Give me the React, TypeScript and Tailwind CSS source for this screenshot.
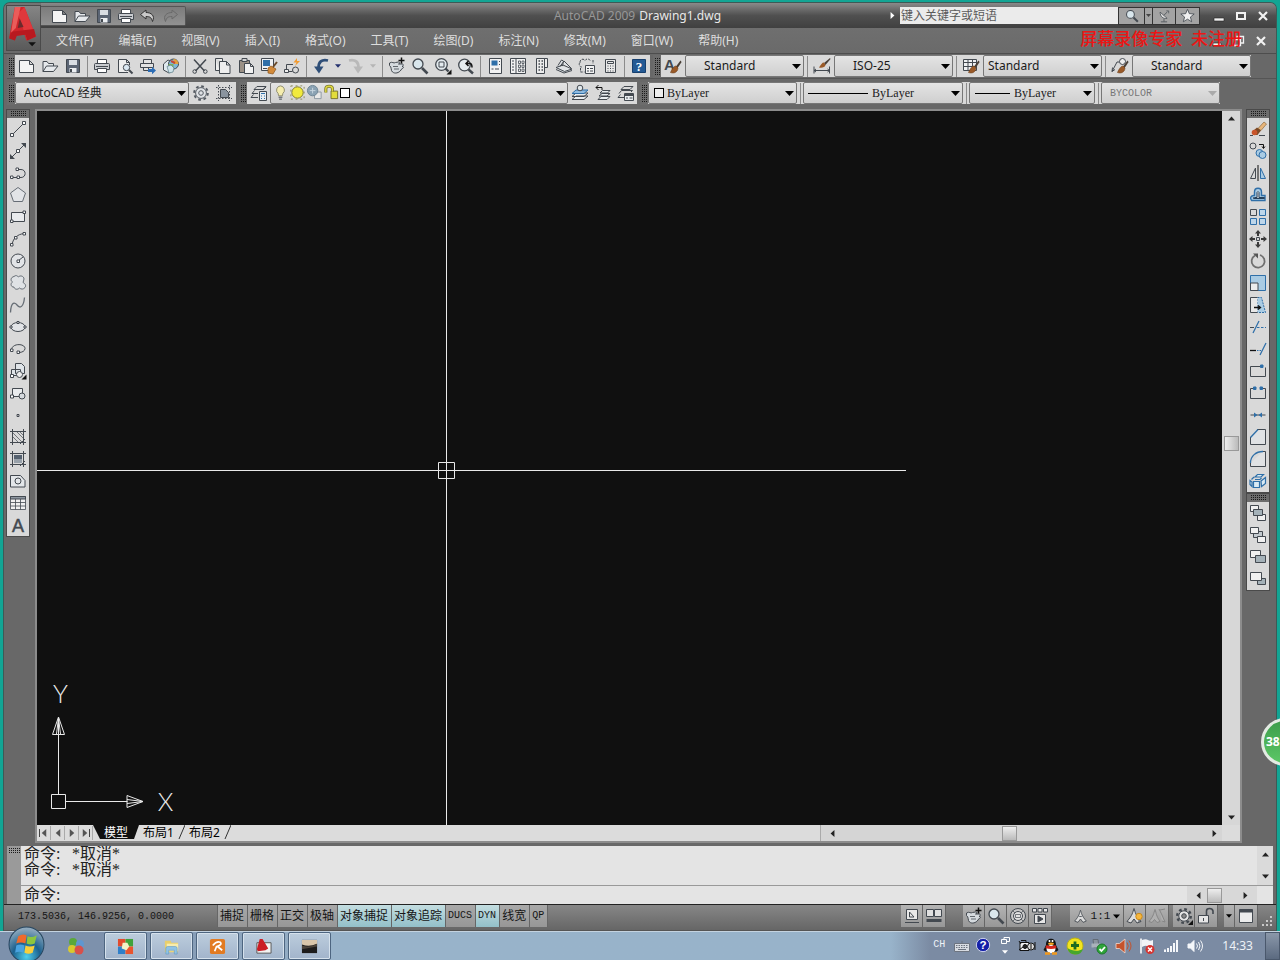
import { useState } from 'react'
import type { ReactNode } from 'react'

const INK = '#434950'
const BLUE = '#2f6fa8'
const SKY = '#a9cbe3'

const BRUSH = (
    <g>
        <path d="M16.500 3.500 12 9.500l1.600 1.400 4-5.900z" fill="#4a4038" stroke="none" />
        <path d="M12 9c-2 .2-3.500 2-5.500 6.500 3.500 1.200 7 0 7.500-4.500z" fill="#9a5a28" stroke="#6b3c18" strokeWidth=".6" />
    </g>
)

// All drawings share an 18x18 box
const ICONS: Record<string, ReactNode> = {
    new: <path d="M1.500 3.500h10l4 4v8h-14zM11.500 3.500v4h4" fill="#f4f4f4" />,
    open: <path d="M2 14.500V4.500h4l1.500 2h5v2.500M2 14.500l3.500-5.500h11.500l-4.500 5.500z" fill="#e6e9ec" />,
    save: (
        <g>
            <path d="M2.500 2.500h13v13h-13z" fill="#5b6574" />
            <path d="M5 3h8v5H5z" fill="#d8dde3" stroke="none" />
            <path d="M5.500 11h7v4.500h-7z" fill="#eceff2" stroke="none" />
            <path d="M7 12v3" strokeWidth="2" />
        </g>
    ),
    print: (
        <g>
            <path d="M4.500 7V2.500h9V7" fill="#fff" />
            <path d="M1.500 7.500q0-1 1-1h13q1 0 1 1v5h-15z" fill="#c9ccd0" />
            <path d="M4.500 11.500h9v4h-9z" fill="#fff" />
            <path d="M3 9.500h12" />
        </g>
    ),
    preview: (
        <g>
            <path d="M12 15.500H2.500v-13h8l3 3V8M10.500 2.500v3h3" fill="#eee" />
            <circle cx="10.500" cy="10.500" r="3.200" fill="#dbe8f2" />
            <path d="m13 13 3.500 3.500" strokeWidth="2" />
        </g>
    ),
    publish: (
        <g>
            <path d="M4.500 6V2.500h8V6M1.500 6.500h13v4h-13zM4.500 10.500h5v3h-5z" fill="#e3e3e3" />
            <path d="M9 12h4V9.800l4 3.700-4 3.700V15H9z" fill="#2b6cb5" stroke="none" />
        </g>
    ),
    dwf: (
        <g>
            <path d="M1.500 7 6 3l5 2v8l-4 3-5.500-3z" fill="#dfe9ee" />
            <circle cx="11.500" cy="7" r="5" fill="#7fb7d8" />
            <path d="M11.500 2a5 5 0 0 1 5 5h-5z" fill="#e3a13c" stroke="none" />
            <path d="M6.500 7h5v5a5 5 0 0 1-5-5z" fill="#7fb05a" stroke="none" />
            <path d="M9 4l4 2" stroke="#c2453a" strokeWidth="2" />
            <path d="M5 9.500 9 8l3 3-1 4-4 1z" fill="#cfe3ea" stroke="#5a7c88" strokeWidth=".7" />
        </g>
    ),
    cut: (
        <g>
            <path d="M3 2.500 13.500 14M15 2.500 4.500 14" strokeWidth="1.500" />
            <circle cx="3.700" cy="14.500" r="1.800" />
            <circle cx="14.300" cy="14.500" r="1.800" />
        </g>
    ),
    copy: <path d="M1.500 1.500h7v3M1.500 1.500v12h4M5.500 4.500h7l3.500 3.500v8.500H5.500zM12.500 4.500V8H16" fill="#eee" />,
    paste: (
        <g>
            <path d="M2.500 3.500h10v12h-10z" fill="#9b9186" />
            <path d="M5 1.500h5v3H5z" fill="#d5d5d5" />
            <path d="M7.500 6.500h6l3 3v7h-9zM13.500 6.500v3h3" fill="#f2f2f2" />
        </g>
    ),
    match: (
        <g>
            <path d="M1.500 1.500h12v12h-12z" fill="#eef1f4" />
            <path d="M3 3h7v6H3z" fill={BLUE} stroke="none" />
            <path d="M3 11.500h4" />
            <path d="M17 5l-4 5" stroke="#6b4a2a" strokeWidth="2" />
            <path d="M8 11l3-2 5 3-3 5-5-1z" fill="#d28a3a" stroke="#8a531d" strokeWidth=".7" />
        </g>
    ),
    block: (
        <g>
            <path d="M10 7.500H3.500v6M5.500 14.500h4" />
            <path d="M1.500 12.500h4v3h-4z" fill="#eee" />
            <circle cx="12.500" cy="13" r="3" />
            <path d="m14 1-3.500 4.500h3L12 9l5-5h-3z" fill="#f29a2e" stroke="none" />
        </g>
    ),
    undo: (
        <g>
            <path d="M16 3.500C9.500 2 6.500 5 6.500 11" stroke="#2f4f78" strokeWidth="2.800" />
            <path d="M2 9.500h9.500L7 16.500z" fill="#2f4f78" stroke="none" />
        </g>
    ),
    redo: (
        <g>
            <path d="M2 3.500C8.500 2 11.500 5 11.500 11" stroke="#b9b9b9" strokeWidth="2.800" />
            <path d="M16 9.500H6.500l4.500 7z" fill="#b9b9b9" stroke="none" />
        </g>
    ),
    undoSmall: <path d="M7 3 1.500 7.500 7 12V9.500c4 0 5.500 1 6.500 5 3-6-1.500-9-6.500-9z" fill="#c9c9c9" stroke="#333" />,
    redoSmall: <path d="m11 3 5.500 4.500L11 12V9.500c-4 0-5.500 1-6.500 5-3-6 1.500-9 6.500-9z" fill="#858585" stroke="#6a6a6a" />,
    pan: (
        <g>
            <path d="M1.500 6c3-2 4 1 6-.500l3-.500c2 0 1.500 2 0 2h3.500c2 0 1.500 2 0 2.500h1c1 1 0 2-1 2l-1 1.500c-2 3-6 4-8.500 2C2.500 13.500 4 10 1.500 8.500z" fill="#d5dade" />
            <path d="M5 9.500h5M6 12h5" strokeWidth=".8" />
            <path d="M13.500.5v6M10.500 3.500h6" stroke="#111" strokeWidth="1.500" />
        </g>
    ),
    zoom: (
        <g>
            <circle cx="7" cy="7" r="5" fill="#d9e6ec" strokeWidth="1.300" />
            <path d="m11 11 5.500 5.500" strokeWidth="2.600" />
        </g>
    ),
    zoomWin: (
        <g>
            <circle cx="7.500" cy="7.500" r="5.800" fill="#e4ebef" strokeWidth="1.300" />
            <path d="M5 5h5v5H5z" />
            <path d="m11.500 11.500 3 3" strokeWidth="2.400" />
            <path d="M17.500 12.500v5h-5z" fill="#111" stroke="none" />
        </g>
    ),
    zoomPrev: (
        <g>
            <circle cx="7.500" cy="8" r="5.800" fill="#e4ebef" strokeWidth="1.300" />
            <path d="m11.500 12.500 4.500 4" strokeWidth="2.400" />
            <path d="M9 6.500h4q2 0 2 4M11.500 4 9 6.500 11.500 9" stroke="#111" strokeWidth="1.500" />
        </g>
    ),
    props: (
        <g>
            <path d="M3.500 1.500h12v15h-12z" fill="#f2f2f2" />
            <path d="M5.500 3.500h6v5h-6z" fill={BLUE} stroke="none" />
            <path d="M5.500 12h2M9 12h4M13.500 4v1M13.500 7v1" />
        </g>
    ),
    center: (
        <g>
            <path d="M1.500 1.500h15v15h-15zM7 1.500v15" fill="#f2f2f2" />
            <path d="M3 4h2M3 7h2M3 10h2M3 13h2" />
            <path d="M9.500 4h2v2.500h-2zM13 4h2v2.500h-2zM9.500 8h2v2.500h-2zM13 8h2v2.500h-2zM9.500 12h2v2.500h-2zM13 12h2v2.500h-2z" strokeWidth=".8" />
        </g>
    ),
    palettes: (
        <g>
            <path d="M4.500 1.500h8v15h-8zM12.500 1.500h3v9h-3z" fill="#ececec" />
            <path d="M6.500 4h1.500M9.500 4H11M6.500 7h1.500M9.500 7H11M6.500 10h1.500M9.500 10H11M6.500 13h1.500M9.500 13H11" strokeWidth="1.500" />
        </g>
    ),
    sheets: <path d="M1 10.500 9.500 14.500 17 12 8 8zM3 8.500 6.500 3l2 1-1 5M5 9.500 9 4l7 7M1 12.500l8 3.500 8-2.500" fill="#dfe3e6" />,
    markup: (
        <g>
            <path d="M2 5.500c0-4 4-4 5-2 2-3 6-1 5 1M2 5.500c-2 2 0 5 2 4.500M15 3v4M2.500 11v4h4" strokeDasharray="2.500 1.200" />
            <path d="M7.500 8.500h9v8h-9z" fill="#f2f2f2" />
            <path d="M9 11.500h2M12 11.500h3M9 14h2M12 14h3" />
        </g>
    ),
    calc: (
        <g>
            <path d="M4.500 2.500h10v13h-10z" fill="#e8e8e8" />
            <path d="M6.500 4.500h6v2h-6z" />
            <path d="M6.500 9h1M9 9h1M11.500 9h1M6.500 11.500h1M9 11.500h1M11.500 11.500h1M6.500 14h1M9 14h1M11.500 14h1" />
        </g>
    ),
    help: (
        <g>
            <path d="M2.500 2.500h13v13h-13z" fill="#245a94" stroke="#163f6e" />
            <text x="9" y="14" textAnchor="middle" fontSize="13" fontWeight="bold" fill="#fff" stroke="none" fontFamily="Liberation Serif, serif">?</text>
        </g>
    ),
    textStyle: (
        <g>
            <text x="0" y="13" fontSize="15" fontWeight="bold" fill={INK} stroke="none" fontFamily="Liberation Sans, sans-serif">A</text>
            {BRUSH}
        </g>
    ),
    dimStyle: (
        <g>
            <path d="M1 9.500v7M16.500 9.500v7M1 13.500h15.500M3 12l-2 1.500L3 15M14.500 12l2 1.500-2 1.500" />
            <path d="M17 1 11 6l1.500 2 5-6z" fill="#4a4038" stroke="none" />
            <path d="M11 5.500c-2 0-3 2-5 5 3 .500 6 0 6.500-2.500z" fill="#9a5a28" stroke="none" />
        </g>
    ),
    tableStyle: (
        <g>
            <path d="M1.500 2.500h13v11h-13zM1.500 5.500h13M1.500 9.500h13M6 2.500v11M10.500 2.500v11" fill="#eef0f2" />
            {BRUSH}
        </g>
    ),
    leader: (
        <g>
            <path d="M1 14.500 6 5h4M1 14.500l.5-4M1 14.500l3-2" />
            <circle cx="11.500" cy="4.500" r="3" fill="#eee" />
            {BRUSH}
        </g>
    ),
    gear: (
        <g stroke="#555b63">
            <circle cx="9" cy="9" r="6.800" strokeWidth="2" strokeDasharray="2.700 2.640" />
            <circle cx="9" cy="9" r="5.400" fill="#dfe2e5" />
            <circle cx="9" cy="9" r="2.300" />
        </g>
    ),
    workspace: (
        <g>
            <path d="M3.500 1v16M14.500 1v16M1 3.500h16M1 14.500h16" strokeDasharray="1.500 1.500" />
            <path d="M5.500 5.500h5l3 3v5h-8z" fill="#8a949f" />
        </g>
    ),
    layers: (
        <g>
            <path d="M4 5.500 7 2.500h9l-3 3zM2 9.500l2.500-3M2 9.500h6M1 13.500l2.500-3M1 13.500h7M16 3l-3 3" />
            <path d="M9.500 7.500h7v9h-7z" fill="#e9edf0" />
            <path d="M11 9.500h4M11 12h1M14 12h1M11 14.500h1M14 14.500h1" stroke={BLUE} />
        </g>
    ),
    layerCur: (
        <g>
            <path d="M1 15.500 5 12h12l-4 3.500zM1 12.500 5 9h12l-4 3.500z" fill="#e9edf0" />
            <path d="M1 9.500 5 6h12l-4 3.500z" fill="#8fbbe0" stroke={BLUE} />
            <circle cx="9" cy="4" r="2.800" fill="#dfe6ea" />
        </g>
    ),
    layerPrev: (
        <g>
            <path d="M4 15.500 7 12.500h9l-3 3zM5 12l3-2.500h8L13 12zM6 9l2.500-2.500H16L13.500 9z" fill="#e9edf0" />
            <path d="M2 3.500h6v2.500M4.500 1 2 3.500 4.500 6" stroke="#111" />
        </g>
    ),
    layerState: (
        <g>
            <path d="M4 5.500 7 2.500h9l-3 3zM2 9.500l2.500-3h11L14 8M1 13.500l2.500-3M1 13.500h6" />
            <path d="M7.500 9.500h9v7h-9z" fill="#e9edf0" />
            <path d="M7.500 11h9" strokeWidth="2" />
            <path d="M9 14h2M12.500 14h3" />
        </g>
    ),
    bulb: (
        <g>
            <path d="M9 2a4.500 4.500 0 0 0-2.500 8l.5 2.500h4l.5-2.500A4.500 4.500 0 0 0 9 2z" fill="#f5edae" stroke="#8d8b6a" />
            <path d="M7 14h4M7.500 16h3" />
        </g>
    ),
    sun: (
        <g>
            <path d="M2 2h14v14H2z" stroke="#8a8a5a" strokeDasharray="2 3" />
            <circle cx="9" cy="9" r="6" fill="#f1ea3c" stroke="#7d7a35" />
        </g>
    ),
    vpFreeze: (
        <g>
            <path d="M9 8.500h7v7H9z" fill="#e8e8e8" stroke="#8b97a0" />
            <circle cx="7" cy="7" r="5.500" fill="#8aa2b3" stroke="#6c8494" />
            <path d="M4 7h6M7 4v6" stroke="#c8d6e0" />
        </g>
    ),
    lock: (
        <g>
            <path d="M8.500 7.500h7v8h-7z" fill="#e2dc3a" stroke="#77732a" />
            <path d="M3 9V5q0-2.500 3.500-2.500T10 5v3" stroke="#77732a" strokeWidth="3.200" />
            <path d="M3 9V5q0-2.500 3.500-2.500T10 5v3" stroke="#dcd640" strokeWidth="1.600" />
        </g>
    ),
    // draw
    line: <g><path d="M3.500 14.500 14.500 3.500" /><path d="M1.500 13.500h3v3h-3zM13.500 1.500h3v3h-3z" fill="#fff" /></g>,
    xline: <g><path d="M3 15 15 3" /><path d="M1 17v-5l5 5zM17 1v5l-5-5z" fill={INK} stroke="none" /><path d="M7.500 7.500h3v3h-3z" fill="#fff" /></g>,
    pline: <g><path d="M3 13.500h7M8 5.500h4c5.500 0 5.500 8 0 8h-2" /><path d="M1.500 12h2.500v2.500H1.500zM8 12h2.500v2.500H8zM7 4h2.500v2.500H7z" fill="#fff" /></g>,
    polygon: <path d="M9 1.500 16.500 7 13.500 15.500h-9L1.500 7z" fill="#e2e4e7" stroke="#666d75" />,
    rect: <g><path d="M2.500 4.500h13v9h-13z" fill="#e9ebed" /><path d="M1.500 12h2.500v2.500H1.500zM14 3h2.500v2.500H14z" fill="#fff" /></g>,
    arc: <g><path d="M3 15.500C3.500 9 8 4 15.500 3.500" /><path d="M1.500 13.500H4V16H1.500zM5.500 6.500H8V9H5.500zM14 2.500h2.500V5H14z" fill="#fff" /></g>,
    circle: <g><circle cx="9" cy="9" r="7" fill="#e2e4e7" /><path d="m9 9 5-4" /><path d="M8 8h2.500v2.500H8z" fill="#fff" /></g>,
    cloud: <path d="M5 2.500c1.500-1.500 3.500-1 4.500.5 1.500-2 5.500-1 5.500 2 0 1.500-1 2.500-1 3.500 2 1 3.500 3 2 5-1.500 2-4 2-5.500.5-2 2-5 1.500-5.500-1-3 .5-4-3.500-1.500-5C1 6.500 2 3 5 2.500z" fill="#dfe2e5" stroke="#666d75" />,
    spline: <path d="M1.500 16.500C2 5 6 6 8.500 9.500c2.500 3 6 2 7-8" stroke="#666d75" strokeWidth="1.300" />,
    ellipse: <g><ellipse cx="9" cy="9" rx="7" ry="4.500" fill="#e2e4e7" /><path d="M1 8h2v2H1zM15 8h2v2h-2zM8 3.500h2v2H8z" fill="#fff" /></g>,
    ellArc: <g><path d="M2.500 10.500C2 3 16 3 16 8.500c0 2.500-3 4-6 4" /><path d="M1.500 9h2.500v2.500H1.500zM8 11h2.500v2.500H8z" fill="#fff" /></g>,
    insert: <g><path d="M6.500 1.500h6l3 3v7h-9zM2.500 7.500h9v6h-9z" fill="#dfe4e8" /><circle cx="10.500" cy="12.500" r="3" fill="#eee" /><path d="M1.500 12.500h3v3h-3z" fill="#fff" /><path d="M17.500 12.500v5h-5z" fill="#111" stroke="none" /></g>,
    makeBlock: <g><path d="M3.500 4.500h10v8h-10z" fill="#e9ebed" /><circle cx="13" cy="12" r="3" fill="#d5d9dd" /><path d="M1.500 11h3v3h-3z" fill="#fff" /></g>,
    point: <path d="M8 8.500h2V10.500H8z" />,
    hatch: <g><path d="M1 3.500h16M1 14.500h16M3.500 1v16M14.500 1v16" /><path d="m4 5 9 9M4 9l5 5M8 4l6 6M11 4l3 3" strokeWidth=".7" /><path d="m11 16 5-5" /></g>,
    gradient: <g><path d="M5 5h8v4H5z" fill="#566270" stroke="none" /><path d="M5 9h8v4H5z" fill="#98a1aa" stroke="none" /><path d="M1 3.500h16M1 14.500h16M3.500 1v16M14.500 1v16M11 16l5-5" /></g>,
    region: <g><path d="M1.500 3.500h10l4.500 5v6.500h-14.500z" fill="#e3e6e9" /><circle cx="9" cy="9" r="3" /></g>,
    table: <g><path d="M1.500 2.500h15v13h-15zM1.500 8.500h15M1.500 12h15M6.500 5v10.500M11.500 5v10.500" fill="#f0f0f0" strokeWidth=".8" /><path d="M1.500 2.500h15V5h-15z" fill="#8f98a1" /></g>,
    mtext: <text x="9" y="15.500" textAnchor="middle" fontSize="18" fontWeight="500" fill={INK} stroke={INK} strokeWidth=".5" fontFamily="Liberation Sans, sans-serif">A</text>,
    // modify
    erase: <g><path d="M9 8.500 15 2l2.500 2L12 10.500z" fill="#e7b57a" stroke="#8d6a3f" strokeWidth=".7" /><path d="M4 11 8 7.500l4 3-3.500 4.500H4z" fill="#7c4a26" stroke="none" /><circle cx="5.500" cy="12.500" r="2.800" fill="#c8542a" stroke="none" /><path d="M1 15.500h3M10 15.500h6" /></g>,
    copyObj: <g><circle cx="4" cy="4" r="3" /><circle cx="10.500" cy="11" r="3.500" fill={SKY} stroke={BLUE} /><circle cx="13.500" cy="13" r="3.500" fill={SKY} stroke={BLUE} /><path d="M10 2.500h4.500V6M13 4.500l1.500 2L16 4.500" stroke="#111" /></g>,
    mirror: <g><path d="M6.500 4v10.500H1.500z" /><path d="M11.500 4v10.500h5z" fill={SKY} stroke={BLUE} /><path d="M9 1v16" stroke="#111" /></g>,
    offset: (
        <g>
            <path d="M2.500 14.500q-2.500-4 2-5h1V6c0-5 7-5 7 0v3.500h3.500v5z" fill={SKY} stroke={BLUE} strokeWidth="1.400" />
            <path d="M4.500 12.500q-1-1 1-1H8V6.500q1-2 2 0v5h5.500v1z" fill="#d9d9d9" stroke="#27415c" />
        </g>
    ),
    array: <g><path d="M1.500 1.500h6v6h-6z" /><path d="M10.500 1.500h6v6h-6zM1.500 10.500h6v6h-6zM10.500 10.500h6v6h-6z" fill="#bdd6ea" stroke={BLUE} /></g>,
    move: <g><path d="M7.500 7.500h3v3h-3z" /><path d="M9 0 6 3.500H8V6h2V3.500h2zM9 18l-3-3.500H8V12h2v2.500h2zM0 9l3.500-3V8H6v2H3.500v2zM18 9l-3.500-3V8H12v2h2.500v2z" fill="#3a3a3a" stroke="none" /></g>,
    rotate: <g stroke="#6f6f6f"><path d="M6 3.500a6.500 6.500 0 1 0 5-.5" strokeWidth="1.800" /><path d="M4 1.500h5v5z" fill="#555" stroke="none" /></g>,
    scale: <g><path d="M1.500 1.500h15v15h-15z" fill={SKY} stroke={BLUE} /><path d="M1.500 9h7.500v7.500H1.500z" fill="#ececec" /></g>,
    stretch: <g><path d="M8.500 1.500h4l4 15h-8z" fill={SKY} stroke={BLUE} strokeDasharray="2 1" /><path d="M8.500 16.500h-7v-15h7" fill="#e8e8e8" /><path d="M5 11.500h6M9 9.500l2.500 2L9 13.500" stroke="#111" strokeWidth="1.300" /></g>,
    trim: <g><path d="m4 15 6-12" stroke={BLUE} strokeWidth="1.300" /><path d="M1 9.500h4" /><path d="M8 9.500h9" stroke={BLUE} strokeDasharray="2.500 1.500" /></g>,
    extend: <g><path d="m11 15 6-12" stroke={BLUE} strokeWidth="1.300" /><path d="M1 10.500h6" stroke="#111" strokeWidth="1.300" /><path d="M8 10.500h4" stroke={BLUE} strokeDasharray="1.500 1" /></g>,
    breakPt: <g><path d="M12 4.500H1.500v10h15V5.500" /><path d="M11.500 3H14v2.500h-2.500z" fill={BLUE} stroke={BLUE} /></g>,
    breakObj: <g><path d="M5 4.500H1.500v10h15v-10H13" /><path d="M4.500 3H7v2.500H4.500zM11 3h2.500v2.500H11z" fill={BLUE} stroke={BLUE} /></g>,
    join: <g><path d="M1.500 9h15" /><path d="m5 6.500 3.500 2.500L5 11.500zM13 6.500 9.500 9l3.500 2.500z" fill={BLUE} stroke="none" /></g>,
    chamfer: <g><path d="M8 1.500h8.500v15h-15V9" fill="#e0e2e4" /><path d="M1.500 9.500 9 1.500" stroke={BLUE} strokeWidth="1.300" /></g>,
    fillet: <g><path d="M14 1.500h2.500v15h-15V13" fill="#e0e2e4" /><path d="M1.500 13C1.500 6 7 1.500 14 1.500" stroke={BLUE} strokeWidth="1.300" /></g>,
    explode: <g fill="#d9eaf4" stroke={BLUE} strokeWidth="1.200"><path d="M4.500 9.500h6v6h-6zM12 9l4.500-3.500v6L12.500 14.500zM1 8.500l2 1.500V14.500L1 12.500zM6 5l2.500-2.500h6L12 5zM2.500 7.500 5 5M6 7.500h5l1.500-1.500" /></g>,
    front: <g><path d="M1.500 1.500h8v6h-8zM8.500 10.500h8v6h-8z" fill="#f0f0f0" /><path d="M4.500 5.500h9v6h-9z" fill="#a4b1b8" /></g>,
    back: <g><path d="M4.500 5.500h9v6h-9z" fill="#c3cacf" /><path d="M1.500 1.500h8v6h-8zM8.500 10.500h8v6h-8z" fill="#f0f0f0" /></g>,
    above: <g><path d="M1.500 2.500h10v7h-10z" fill="#f0f0f0" /><path d="M6.500 7.500h10v7h-10z" fill="#a4b1b8" /></g>,
    under: <g><path d="M8.500 8.500h8v6h-8z" fill="#a4b1b8" /><path d="M1.500 2.500h11v8h-11z" fill="#f0f0f0" /></g>,
    // info center and status bar
    dish: <path d="M4 4c0 6 4 9 9 8zM9 8l5-5M5 16.500h8M9 13v3M12 2.500h3v3" fill="#ddd" />,
    star: <path d="m9 1.500 2.200 5.300 5.800.4-4.500 3.600 1.500 5.700L9 13.400l-5 3.100 1.500-5.700L1 7.200l5.800-.4z" fill="#f0f0f0" />,
    modelTab: <g><path d="M3.500 2.500h11v10h-11z" fill="#e8e8e8" /><path d="M6.500 5v5H11zM2 15.500h14" /></g>,
    layoutTab: <g><path d="M1.500 2.500h7v7h-7zM9.500 2.500h7v7h-7z" fill="#e0e0e0" /><path d="M1.500 13.500h15" strokeWidth="3" /></g>,
    wheel: <g><circle cx="9" cy="9" r="7.500" fill="#c8c8c8" /><circle cx="9" cy="9" r="4.500" fill="#e2e2e2" /><path d="M6.500 7.500h5v3h-5zM3.500 3.500l2.500 2.500M14.500 3.500l-2.500 2.500M3.500 14.500l2.500-2.500M14.500 14.500l-2.500-2.500" strokeWidth=".7" /></g>,
    motion: <g fill="#e6e6e6"><path d="M1.500 1.500h4v3.500h-4zM7 1.500h4v3.500H7zM12.500 1.500h4v3.500h-4zM3.500 7.500h11v9h-11z" /><path d="m7 9 5 3-5 3z" fill={INK} /></g>,
    anno: <path d="M9 1.500c1.500 4 1 6 7 13l-4 1.500-3-4-3 4-4-1.500c6-7 5.500-9 7-13zM7.500 9h3" fill="#dcdcdc" />,
    annoVis: <g><path d="M8 1.500c1.500 4 1 6 7 13l-4 1.500-3-4-3 4-4-1.500c6-7 5.500-9 7-13z" fill="#dcdcdc" /><circle cx="13" cy="9.500" r="3.200" fill="#f6b63c" stroke="#c98a1c" /><path d="M12 14h2.500" /></g>,
    annoAuto: <path d="M7 2.500c1.500 4 1 6 5 12l-3 1-2.500-3-2.500 3-3-1c5-6 4.500-8 6-12zM11 2l3 6 3 7-3-1M12 3l5-1" fill="#b0b0b0" stroke="#858585" />,
    gearSt: <g><circle cx="9" cy="9" r="6.800" strokeWidth="2.400" strokeDasharray="2.700 2.640" /><circle cx="9" cy="9" r="5.200" fill="#e6e6e6" /><circle cx="9" cy="9" r="2.300" fill="#8a8a8a" /><path d="M18 13v5h-5z" fill="#111" stroke="none" /></g>,
    lockSt: <g><path d="M1.500 8.500h10v7.500h-10z" fill="#e6e6e6" /><path d="M9.500 8V4q0-2.500 3-2.500t3.500 2.500v3" strokeWidth="1.600" /><path d="M6.500 11v3" /></g>,
    screen: <g><path d="M2.500 2.500h13v13h-13z" fill="#ececec" /><path d="M2.500 4h13" strokeWidth="3" /></g>,
    // tray
    keyboard: <g stroke="#6d7480"><path d="M1.500 6.500h15v8h-15z" fill="#d8dce2" /><path d="M3 8.500h12M3 10.500h12" strokeDasharray="1.500 1" /><path d="M5 12.500h8M9 6V4" /></g>,
    helpBall: <g><circle cx="9" cy="9" r="7.500" fill="#1420a8" stroke="#dfe3f5" /><text x="9" y="13.500" textAnchor="middle" fontSize="13" fontWeight="bold" fill="#fff" stroke="none" fontFamily="Liberation Sans, sans-serif">?</text></g>,
    camera: <g stroke="#111"><path d="M2 5.500h9v8H2z" fill="#f2f2f2" /><path d="M3 3.500h5v2.500" /><circle cx="13" cy="9.500" r="3.500" fill="#dadada" /><circle cx="7" cy="9.500" r="2" fill="#222" /><path d="m1 13 4-3M13 7v5M1 4l2 3M17 5v8" /></g>,
    penguin: <g><path d="M4 8C3.500-.5 14.500-.5 14 8l2.500 5-2 1.500h-11L1.500 13z" fill="#151515" stroke="none" /><ellipse cx="9" cy="12" rx="4.500" ry="4" fill="#fff" stroke="none" /><ellipse cx="9" cy="6.700" rx="3" ry="1.200" fill="#f5a623" stroke="none" /><path d="M4 9.500q5 2 10 0" stroke="#d8261c" strokeWidth="3" /><path d="M3 16.500h5M10 16.500h5" stroke="#f39a1d" strokeWidth="2.400" /><path d="M7.500 3v2M10.500 3v2" stroke="#fff" strokeWidth="1.600" /></g>,
    guard: <g><circle cx="9" cy="9" r="8" fill="#f2e41e" stroke="#b9b01a" /><path d="M1.500 11a8 8 0 0 0 15.500 1c-5 3-11 2-15.500-1z" fill="#46a62c" stroke="none" /><path d="M9 4.500v8M5 8.500h8" stroke="#1d6b20" strokeWidth="2.800" /></g>,
    usb: <g><path d="M3 2.500h5l1 8H4z" fill="#8b95a0" stroke="#636c76" /><path d="M1.500 6.500h9v4h-9z" fill="#a9b2bb" stroke="none" /><circle cx="12" cy="12" r="5" fill="#2fa53a" stroke="#1c7a27" /><path d="m9.500 12 2 2 3.500-4" stroke="#fff" strokeWidth="1.800" /></g>,
    speaker: <g><path d="M2 6.500h3.500L11 2v14l-5.500-4.500H2z" fill="#c5532c" stroke="#f3d9ce" strokeWidth=".8" /><path d="M13 5.500q2.500 3.500 0 7M15 3.500q4 5.500 0 11" stroke="#c5532c" /></g>,
    flag: <g><path d="M3 1.500v15" stroke="#fff" strokeWidth="1.600" /><path d="M4 3q4-1.500 6 0t5 0v7q-3 1-5-.5T4 10z" fill="#f2f4f7" stroke="none" /><circle cx="12" cy="12.500" r="4.500" fill="#d63430" stroke="none" /><path d="m10 10.500 4 4M14 10.500l-4 4" stroke="#fff" strokeWidth="1.500" /></g>,
    signal: <g stroke="#f5f7fa" strokeWidth="2"><path d="M3 15v-2.500M6 15v-4M9 15V9M12 15V6M15 15V3" /></g>,
    volume: <g stroke="#f5f7fa"><path d="M2 7h2.500L8 3.500v11L4.500 11H2z" fill="#f5f7fa" /><path d="M10.500 6.500q2 2.500 0 5M12.500 5q3 4 0 8M14.500 3.500q4 5.500 0 11" /></g>,
}

function Icon({ name, size = 'size-[18px]' }: { name: string; size?: string }) {
    return (
        <svg viewBox="0 0 18 18" className={`${size} shrink-0`} fill="none" stroke={INK} strokeWidth="1" aria-hidden="true">
            {ICONS[name]}
        </svg>
    )
}

function IconButton({ name, className = 'h-full w-[23px]' }: { name: string; className?: string }) {
    return (
        <button type="button" aria-label={name} className={`flex shrink-0 items-center justify-center ${className}`}>
            <Icon name={name} />
        </button>
    )
}

type Dir = 'up' | 'down' | 'left' | 'right'

const ARROWS: Record<Dir, string> = {
    down: 'M0 2h9L4.500 7z',
    up: 'M0 7h9L4.500 2z',
    left: 'M7 0v9L2 4.500z',
    right: 'M2 0v9l5-4.500z',
}

function Arrow({ dir = 'down', className = 'size-[9px] fill-black' }: { dir?: Dir; className?: string }) {
    return (
        <svg viewBox="0 0 9 9" className={`shrink-0 ${className}`} aria-hidden="true">
            <path d={ARROWS[dir]} />
        </svg>
    )
}

const DOTS = 'bg-[conic-gradient(#1a1a1a_25%,transparent_0)] bg-[length:2px_2px]'

function Grip({ className = 'w-2 h-[23px] px-px py-[3px]' }: { className?: string }) {
    return (
        <div className={`flex shrink-0 bg-[#6c6c6c] ${className}`}>
            <div className={`flex-1 ${DOTS}`} />
        </div>
    )
}

function Sep() {
    return (
        <div className="flex h-full w-[6px] shrink-0 items-center justify-center">
            <div className="h-[21px] w-px bg-[#8b8b8b]" />
        </div>
    )
}

interface ComboProps {
    label: string
    value: string
    width: string
    text?: string
    disabled?: boolean
    children?: ReactNode
}

function Combo({ label, value, width, text = 'pl-5', disabled, children }: ComboProps) {
    return (
        <div className={`relative h-full shrink-0 rounded-xs border border-[#777] bg-linear-to-b from-[#e4e4e4] to-[#cfcfcf] ${width}`}>
            {children}
            <select
                aria-label={label}
                disabled={disabled}
                className={`relative h-full w-full appearance-none bg-transparent pr-4 outline-none ${text} ${disabled ? 'text-[#777]' : 'text-[#1b1b1b]'}`}
            >
                <option>{value}</option>
            </select>
            <Arrow className={`pointer-events-none absolute right-[2px] top-[6px] size-[9px] ${disabled ? 'fill-[#aaa]' : 'fill-black'}`} />
        </div>
    )
}

const SERIF = "text-[12px] font-['Liberation_Serif','Noto_Sans_CJK_SC',serif]"
const MONO = "text-[10px] font-['Liberation_Mono','Noto_Sans_CJK_SC',monospace]"

const MENUS = ['文件(F)', '编辑(E)', '视图(V)', '插入(I)', '格式(O)', '工具(T)', '绘图(D)', '标注(N)', '修改(M)', '窗口(W)', '帮助(H)']
const QUICK = ['new', 'open', 'save', 'print', 'undoSmall', 'redoSmall']
const DRAW = ['line', 'xline', 'pline', 'polygon', 'rect', 'arc', 'circle', 'cloud', 'spline', 'ellipse', 'ellArc', 'insert', 'makeBlock', 'point', 'hatch', 'gradient', 'region', 'table', 'mtext']
const MODIFY = ['erase', 'copyObj', 'mirror', 'offset', 'array', 'move', 'rotate', 'scale', 'stretch', 'trim', 'extend', 'breakPt', 'breakObj', 'join', 'chamfer', 'fillet', 'explode']
const ORDER = ['front', 'back', 'above', 'under']
const TRAY = ['camera', 'penguin', 'guard', 'usb', 'speaker', 'flag', 'signal', 'volume']

const STYLES = [
    { icon: 'textStyle', label: '文字样式', value: 'Standard', text: 'pl-[18px]' },
    { icon: 'dimStyle', label: '标注样式', value: 'ISO-25', text: 'pl-[18px]' },
    { icon: 'tableStyle', label: '表格样式', value: 'Standard', text: 'pl-1' },
    { icon: 'leader', label: '多重引线样式', value: 'Standard', text: 'pl-[18px]' },
]

const MODES = [
    { id: '捕捉', on: false },
    { id: '栅格', on: false },
    { id: '正交', on: false },
    { id: '极轴', on: false },
    { id: '对象捕捉', on: true },
    { id: '对象追踪', on: true },
    { id: 'DUCS', on: false },
    { id: 'DYN', on: true },
    { id: '线宽', on: false },
    { id: 'QP', on: false },
]

function WindowControls({ small }: { small?: boolean }) {
    return (
        <div className="flex items-center">
            <button type="button" aria-label="最小化" className="flex w-[22px] justify-center">
                <svg viewBox="0 0 12 12" className="size-3"><path d={small ? 'M2 8h8v3H2z' : 'M1 8h10v3H1z'} fill="#f2f2f2" stroke="#222" strokeWidth=".6" /></svg>
            </button>
            <button type="button" aria-label="还原" className="flex w-[22px] justify-center">
                <svg viewBox="0 0 12 12" className="size-3" fill="none" stroke="#f2f2f2" strokeWidth="2">
                    {small ? <path d="M4 4V1.500h6.500V8H8M1.500 4.500h6v6h-6z" strokeWidth="1.300" /> : <path d="M2 3h8v6H2z" />}
                </svg>
            </button>
            <button type="button" aria-label="关闭" className="flex w-[22px] justify-center">
                <svg viewBox="0 0 12 12" className="size-3"><path d="m2 2 8 8M10 2l-8 8" stroke="#f2f2f2" strokeWidth="2.200" /></svg>
            </button>
        </div>
    )
}

function Header() {
    return (
        <header className="relative flex h-[50px] shrink-0 rounded-t-md bg-linear-to-b from-[#747474] to-[#6a6a6a]">
            <button type="button" aria-label="菜单浏览器" className="ml-[2px] mt-[2px] flex h-[46px] w-[35px] shrink-0 justify-center border border-[#4a4a4a] bg-linear-to-b from-[#858585] to-[#5a5a5a]">
                <svg viewBox="0 0 34 46" className="h-[44px] w-[33px]" aria-hidden="true">
                    <path d="M8 1h10l12 31-10 4-2-6-9 1-1 5-6-3z" fill="#cf252b" />
                    <path d="m18 1 12 31-9 4L11 8z" fill="#e0383c" />
                    <path d="m13 13 4 9-6 1z" fill="#6b2a2c" />
                    <path d="m2 34 2-7 24-3 2 8-9 4-2-6-9 1-2 5z" fill="#b8191f" />
                    <path d="M8 1h6l-5 22-5 5z" fill="#ea5c5a" />
                    <path d="M22 38h8l-4 4z" fill="#111" />
                </svg>
            </button>
            <div className="flex min-w-0 flex-1 flex-col">
                <div className="grid h-[25px] shrink-0 grid-cols-[1fr_auto_1fr] rounded-tr-md bg-linear-to-b from-[#8a8a8a] via-[#505050] to-[#404040]">
                    <div className="mt-[3px] flex h-5 items-center justify-self-start rounded-r-xs border border-l-0 border-[#555] bg-linear-to-b from-[#7c7c7c] to-[#929292] pl-2 pr-1">
                        {QUICK.map((name) => (
                            <button key={name} type="button" aria-label={name} className="flex w-[22px] justify-center">
                                <Icon name={name} />
                            </button>
                        ))}
                    </div>
                    <h1 className="flex items-center gap-1 pr-[42px] text-[12px] text-[#979797]">
                        AutoCAD 2009 <span className="text-[#e8e8e8]">Drawing1.dwg</span>
                    </h1>
                    <div className="flex items-center justify-end pr-[2px]">
                        <Arrow dir="right" className="mr-1 size-[7px] fill-white" />
                        <input
                            aria-label="搜索"
                            placeholder="键入关键字或短语"
                            className="h-[17px] w-[218px] bg-[#ebebeb] px-px text-[12px] outline-none placeholder:text-[#5a5a5a]"
                        />
                        <div className="mr-2 flex h-[18px] divide-x divide-[#333] border border-[#333] bg-[#a3a3a3]">
                            <button type="button" aria-label="查找" className="flex w-[26px] items-center justify-center"><Icon name="zoom" size="size-[14px]" /></button>
                            <button type="button" aria-label="查找选项" className="flex w-2 items-center justify-center"><Arrow className="size-[5px] fill-[#444]" /></button>
                            <button type="button" aria-label="通讯中心" className="flex w-[23px] items-center justify-center"><Icon name="dish" size="size-[14px]" /></button>
                            <button type="button" aria-label="收藏夹" className="flex w-[23px] items-center justify-center"><Icon name="star" size="size-[15px]" /></button>
                        </div>
                        <WindowControls />
                    </div>
                </div>
                <div className="flex h-[25px] items-center justify-between pl-[15px] pr-[4px]">
                    <nav className="flex gap-[25px] text-[12px] text-[#dedede]">
                        {MENUS.map((m) => (
                            <button key={m} type="button" className="whitespace-nowrap">{m}</button>
                        ))}
                    </nav>
                    <WindowControls small />
                </div>
            </div>
            <p className="pointer-events-none absolute right-[34px] top-[24px] whitespace-pre text-[17px] font-medium leading-6 text-[#ec1515]">屏幕录像专家  未注册</p>
        </header>
    )
}

const PANEL = 'flex h-[22px] shrink-0 items-center bg-[#d9d9d9]'

function Toolbars() {
    return (
        <div className="shrink-0 border-t border-[#4d4d4d] pl-[3px]">
            <div className="flex h-[24px] items-center">
                <Grip />
                <div className={PANEL}>
                    {['new', 'open', 'save'].map((n) => <IconButton key={n} name={n} />)}
                    <Sep />
                    {['print', 'preview', 'publish', 'dwf'].map((n) => <IconButton key={n} name={n} />)}
                    <Sep />
                    {['cut', 'copy', 'paste', 'match', 'block'].map((n) => <IconButton key={n} name={n} />)}
                    <Sep />
                    <IconButton name="undo" />
                    <button type="button" aria-label="放弃列表" className="flex w-3 justify-center"><Arrow className="size-[6px] fill-[#23306e]" /></button>
                    <IconButton name="redo" />
                    <button type="button" aria-label="重做列表" className="flex w-3 justify-center"><Arrow className="size-[6px] fill-[#b5b5b5]" /></button>
                    <Sep />
                    {['pan', 'zoom', 'zoomWin', 'zoomPrev'].map((n) => <IconButton key={n} name={n} />)}
                    <Sep />
                    {['props', 'center', 'palettes', 'sheets', 'markup', 'calc'].map((n) => <IconButton key={n} name={n} />)}
                    <Sep />
                    <IconButton name="help" />
                </div>
                <Grip className="ml-[3px] h-[23px] w-2 px-px py-[3px]" />
                <div className={`${PANEL} text-[12px]`}>
                    {STYLES.map((s, i) => (
                        <div key={s.icon} className="flex h-full items-center">
                            {i > 0 && <Sep />}
                            <IconButton name={s.icon} className="h-full w-6" />
                            <Combo label={s.label} value={s.value} width="w-[119px]" text={s.text} />
                        </div>
                    ))}
                </div>
            </div>
            <div className="flex h-[29px] items-center border-t border-[#555]">
                <Grip />
                <div className={`${PANEL} text-[12px]`}>
                    <Combo label="工作空间" value="AutoCAD 经典" width="w-[174px]" text="pl-2" />
                    <IconButton name="gear" />
                    <IconButton name="workspace" className="h-full w-6" />
                </div>
                <Grip className="ml-[3px] h-[23px] w-2 px-px py-[3px]" />
                <div className={`${PANEL} text-[12px]`}>
                    <IconButton name="layers" />
                    <Combo label="图层" value="0" width="w-[298px]" text="pl-[84px]">
                        <div className="absolute left-[1px] top-[1px] flex items-center">
                            {['bulb', 'sun', 'vpFreeze', 'lock'].map((n) => (
                                <span key={n} className="flex w-[17px] justify-center"><Icon name={n} size="size-[17px]" /></span>
                            ))}
                            <span className="size-[10px] border border-black bg-white" />
                        </div>
                    </Combo>
                    {['layerCur', 'layerPrev', 'layerState'].map((n) => <IconButton key={n} name={n} />)}
                </div>
                <Grip className="ml-[3px] h-[23px] w-2 px-px py-[3px]" />
                <div className={`${PANEL} ${SERIF}`}>
                    <Combo label="颜色" value="ByLayer" width="w-[149px]" text="pl-[18px]">
                        <span className="absolute left-[5px] top-[5px] size-[10px] border border-black bg-[#eee]" />
                    </Combo>
                    <Sep />
                    <Combo label="线型" value="ByLayer" width="w-[160px]" text="pl-[68px]">
                        <span className="absolute left-[4px] top-[10px] h-px w-[60px] bg-black" />
                    </Combo>
                    <Sep />
                    <Combo label="线宽" value="ByLayer" width="w-[126px]" text="pl-[44px]">
                        <span className="absolute left-[5px] top-[10px] h-px w-[35px] bg-black" />
                    </Combo>
                    <Sep />
                    <Combo label="打印样式" value="BYCOLOR" width="w-[119px]" text={`pl-2 ${MONO}`} disabled />
                </div>
            </div>
        </div>
    )
}

function ToolColumn({ names }: { names: string[] }) {
    return (
        <div className="flex flex-col border border-[#4a4a4a]">
            <Grip className="h-2 w-full px-[3px] py-px" />
            <div className="flex flex-col bg-[#d9d9d9]">
                {names.map((n) => <IconButton key={n} name={n} className="h-[22px] w-full" />)}
            </div>
        </div>
    )
}

function DrawingArea() {
    return (
        <div className="relative min-w-0 flex-1 overflow-hidden bg-[#101010]">
            <svg className="absolute inset-0 h-full w-full" fill="none" stroke="#e9e9e9" aria-hidden="true">
                <line x1="409.5" y1="0" x2="409.5" y2="100%" />
                <path d="M0 359.500h869M401.500 351.500h16v16h-16z" />
            </svg>
            <svg viewBox="0 0 150 150" className="absolute bottom-0 left-0 size-[150px]" fill="none" stroke="#e9e9e9" aria-hidden="true">
                <path d="M14.500 119.500h14v14h-14zM21.500 119.500v-76M28.500 126.500h62" />
                <path d="m21.500 42-6 17.500h12zM19.500 59l2-16 2 16M106 126.500l-16-6v12zM90 124.500l16 2-16 2" />
                <g fill="#e9e9e9" stroke="none" fontFamily="Lato, sans-serif" fontWeight="300" fontSize="25">
                    <text x="23.500" y="28" textAnchor="middle">Y</text>
                    <text x="128.500" y="136" textAnchor="middle">X</text>
                </g>
            </svg>
        </div>
    )
}

const THUMB = 'size-[15px] shrink-0 border border-[#999] from-[#eee] to-[#bbb]'

function ModelTabs() {
    const [active, setActive] = useState('模型')

    return (
        <div className="flex h-[16px] shrink-0 items-center bg-[#dcdcdc] text-[12px]">
            {['first', 'left', 'right', 'last'].map((k) => (
                <button key={k} type="button" aria-label={k} className="flex h-[14px] w-[14px] items-center justify-center border-r border-[#aaa]">
                    {k === 'first' && <span className="h-2 w-px bg-[#444]" />}
                    <Arrow dir={k === 'first' || k === 'left' ? 'left' : 'right'} className="size-[8px] fill-[#555]" />
                    {k === 'last' && <span className="h-2 w-px bg-[#444]" />}
                </button>
            ))}
            <div className="flex h-full" role="tablist">
                {['模型', '布局1', '布局2'].map((t) => (
                    <button
                        key={t}
                        type="button"
                        role="tab"
                        aria-selected={active === t}
                        onClick={() => setActive(t)}
                        className={`relative flex h-full w-[46px] items-center leading-none ${active === t ? 'justify-center text-white' : 'pl-1 text-black'}`}
                    >
                        <svg viewBox="0 0 46 16" className="absolute inset-0 h-full w-full" preserveAspectRatio="none" aria-hidden="true">
                            {active === t ? <path d="M0 0h46l-5 14H7z" fill="#101010" /> : <path d="M46 0l-6 14" fill="none" stroke="#333" />}
                        </svg>
                        <span className="relative">{t}</span>
                    </button>
                ))}
            </div>
            <div className="ml-auto flex h-full w-[402px] items-center border-l border-[#aaa] bg-[#d5d5d5] pl-2 pr-1">
                <Arrow dir="left" className="size-[7px] fill-[#222]" />
                <span className="flex-[6]" />
                <span className={`${THUMB} bg-linear-to-b`} />
                <span className="flex-[7]" />
                <Arrow dir="right" className="size-[7px] fill-[#222]" />
            </div>
            <div className="w-[18px]" />
        </div>
    )
}

function CommandLine() {
    return (
        <section className="ml-[3px] mr-[3px] flex h-[58px] shrink-0 text-[16px] text-[#222] font-['Liberation_Serif','Noto_Sans_CJK_SC',serif]">
            <div className="w-[14px] shrink-0 bg-[#9a9a9a] px-px pt-[2px]">
                <div className={`h-[5px] ${DOTS}`} />
            </div>
            <div className="flex min-w-0 flex-1 flex-col bg-[#e4e4e4]">
                <div className="flex h-[40px] shrink-0 border-b border-[#999]">
                    <div className="flex-1 overflow-hidden pl-[3px] leading-4">
                        {[0, 1].map((i) => (
                            <p key={i} className="flex"><span className="w-12">命令:</span>*取消*</p>
                        ))}
                    </div>
                    <div className="flex w-[16px] flex-col items-center justify-between bg-[#dadada] py-[5px]">
                        <Arrow dir="up" className="size-[7px] fill-[#222]" />
                        <Arrow className="size-[7px] fill-[#222]" />
                    </div>
                </div>
                <div className="flex h-[18px] items-center">
                    <label htmlFor="cmd" className="pl-[3px] leading-4">命令:</label>
                    <input id="cmd" className="h-4 min-w-0 flex-1 bg-transparent outline-none" />
                    <div className="mr-4 flex h-full w-[70px] items-center bg-[#d8d8d8] px-[8px]">
                        <Arrow dir="left" className="size-[7px] fill-[#222]" />
                        <span className={`${THUMB} ml-[5px] bg-linear-to-b`} />
                        <Arrow dir="right" className="ml-auto size-[7px] fill-[#222]" />
                    </div>
                </div>
            </div>
        </section>
    )
}

const CELL = 'flex h-[22px] items-center justify-center'
const CLUSTER = 'flex divide-x divide-[#666] border-r border-[#666] bg-linear-to-b from-[#b4b4b4] to-[#979797]'

function StatusBar() {
    const [modes, setModes] = useState(MODES)

    const toggle = (id: string) => {
        setModes(modes.map((m) => (m.id === id ? { ...m, on: !m.on } : m)))
    }

    return (
        <footer className="flex h-[27px] shrink-0 items-start border-y border-t-[#222] border-b-[#555] bg-linear-to-b from-[#878787] to-[#666] text-[#151515]">
            <span className={`w-[213px] shrink-0 whitespace-pre pl-[14px] leading-[24px] ${MONO}`}>173.5036, 146.9256, 0.0000</span>
            <div className="flex h-[22px] shrink-0 border-l border-[#666]">
                {modes.map((m) => (
                    <button
                        key={m.id}
                        type="button"
                        aria-pressed={m.on}
                        onClick={() => toggle(m.id)}
                        className={`border-r border-[#666] pl-[2px] pr-[3px] leading-none ${/[A-Z]/.test(m.id) ? MONO : 'text-[12px]'} ${m.on ? 'bg-linear-to-b from-[#c3dde0] to-[#93c0c9]' : 'bg-linear-to-b from-[#a9a9a9] to-[#979797]'}`}
                    >
                        {m.id}
                    </button>
                ))}
            </div>
            <div className="ml-auto flex items-start">
                <div className={`${CLUSTER} mr-[17px]`}>
                    <IconButton name="modelTab" className={`${CELL} w-[22px]`} />
                    <IconButton name="layoutTab" className={`${CELL} w-[22px]`} />
                </div>
                <div className={`${CLUSTER} mr-[18px]`}>
                    {['pan', 'zoom', 'wheel', 'motion'].map((n) => <IconButton key={n} name={n} className={`${CELL} w-[22px]`} />)}
                </div>
                <div className={`${CLUSTER} mr-[4px]`}>
                    <button type="button" className={`${CELL} w-[54px] gap-[3px] text-[11px] font-['Liberation_Mono',monospace]`}>
                        <Icon name="anno" size="size-[15px]" />1:1<Arrow className="size-[7px] fill-black" />
                    </button>
                    <IconButton name="annoVis" className={`${CELL} w-[22px]`} />
                    <IconButton name="annoAuto" className={`${CELL} w-[22px]`} />
                </div>
                <div className={`${CLUSTER} mr-[6px]`}>
                    <IconButton name="gearSt" className={`${CELL} w-[22px]`} />
                    <IconButton name="lockSt" className={`${CELL} w-[22px]`} />
                </div>
                <div className={CLUSTER}>
                    <button type="button" aria-label="状态栏菜单" className={`${CELL} w-[11px]`}><Arrow className="size-[6px] fill-black" /></button>
                    <IconButton name="screen" className={`${CELL} w-[22px]`} />
                </div>
                <svg viewBox="0 0 12 12" className="ml-[4px] mr-[2px] mt-[11px] size-3" fill="#c9c9c9" aria-hidden="true">
                    <path d="M8 0h2v2H8zM8 4h2v2H8zM8 8h2v2H8zM4 4h2v2H4zM4 8h2v2H4zM0 8h2v2H0z" />
                </svg>
            </div>
        </footer>
    )
}

const APPS: { id: string; art: ReactNode }[] = [
    { id: '360', art: <g><path d="M1 1h16v16H1z" fill="#e8e2d0" /><path d="M1 1h8v8H1z" fill="#e14b2e" /><path d="M9 1h8v8H9z" fill="#3fa33c" /><path d="M1 9h8v8H1z" fill="#2f7fc9" /><path d="M9 9h8v8H9z" fill="#e9552f" /><path d="M6 5l5 0 2 4-3 4-5-2z" fill="#f4f2c8" /></g> },
    { id: '资源管理器', art: <g><path d="M2 3h6l1 2h7v10H2z" fill="#e9cf6b" /><path d="M4 6h12v8H4z" fill="#f7ecae" /><path d="M3 17V11q0-2 2-2h8q2 0 2 2v6h-3v-4H6v4z" fill="#8fc3e6" stroke="#5f97bf" strokeWidth=".6" /></g> },
    { id: '录像', art: <g><rect x="1" y="1" width="16" height="16" rx="2" fill="#e27b22" /><path d="M4 8q4-5 8-3.500c2 2-1 4-4 4.500l-2 5M9 9l5 4" fill="none" stroke="#fff" strokeWidth="1.800" /></g> },
    { id: 'AutoCAD', art: <g><path d="M2 5h15v11H2z" fill="#f2f2f2" stroke="#555" /><path d="M5 1h3l6 10-3 2-8 1-1-2z" fill="#cb1d25" /></g> },
    { id: '照片', art: <g><path d="M1 2h16v14H1z" fill="#1d1c1c" /><path d="M1 2h16v4q-8 4-16 1z" fill="#d9c6ab" /><path d="M1 8q8 3 16-2v3L1 12z" fill="#4d443b" /></g> },
]

function Taskbar() {
    return (
        <div className="relative flex h-[29px] shrink-0 items-center border-t border-[#c4d3e0] bg-linear-to-r from-[#7d91ac] from-8% to-[#98b3ca] to-26%">
            <button type="button" aria-label="开始" className="absolute bottom-[-3px] left-[8px] size-[37px]">
                <svg viewBox="0 0 36 36" className="size-full" aria-hidden="true">
                    <defs>
                        <radialGradient id="orb" cx="50%" cy="85%" r="80%">
                            <stop offset="0" stopColor="#4fd0ee" />
                            <stop offset=".5" stopColor="#1c618f" />
                            <stop offset="1" stopColor="#8fa9bd" />
                        </radialGradient>
                    </defs>
                    <circle cx="18" cy="18" r="17" fill="url(#orb)" stroke="#27465f" />
                    <path d="M10 10q4-3 8-1l-1 8q-5-2-9 0z" fill="#ef6a2c" />
                    <path d="M19 10q4 2 9-1l-2 8q-4 2-8 0z" fill="#8cc63e" />
                    <path d="M8 19q4-2 8 0l-1 7q-4-2-8 0z" fill="#4aa3e0" />
                    <path d="M17 19q4 2 9 0l-2 7q-4 2-8 0z" fill="#f8cf3c" />
                </svg>
            </button>
            <button type="button" aria-label="小工具" className="ml-[66px] mr-[18px]">
                <svg viewBox="0 0 20 20" className="size-5" aria-hidden="true">
                    <circle cx="7" cy="6" r="4" fill="#5aa83a" />
                    <circle cx="14" cy="8" r="4" fill="#5f97d0" />
                    <circle cx="6" cy="13" r="4" fill="#d9c92e" />
                    <circle cx="13" cy="14" r="4.500" fill="#d8504a" />
                </svg>
            </button>
            <div className="flex h-full gap-[3px]">
                {APPS.map((a) => (
                    <button key={a.id} type="button" aria-label={a.id} className="flex h-full w-[43px] items-center justify-center rounded-xs border border-[#4d6580] bg-linear-to-b from-[#bccddd] to-[#a2b4cb] shadow-[inset_0_0_0_1px_#d5e1ec]">
                        <svg viewBox="0 0 18 18" className="size-[17px]" aria-hidden="true">{a.art}</svg>
                    </button>
                ))}
            </div>
            <div className="ml-auto flex h-full items-center bg-linear-to-r from-transparent to-[#7b8ba3] to-10% pl-[42px] text-[#eef2f7]">
                <span className={`mb-1 mr-2 ${MONO}`}>CH</span>
                <Icon name="keyboard" />
                <span className="mb-[2px] ml-[4px]"><Icon name="helpBall" size="size-4" /></span>
                <div className="ml-[6px] mr-[2px] flex w-4 flex-col items-center gap-[5px]">
                    <svg viewBox="0 0 9 7" className="h-[7px] w-[9px]" fill="none" stroke="#fff" aria-hidden="true"><path d="M3 2.500v-2h5.500v4H6M.5 2.500h5v4h-5z" /></svg>
                    <Arrow className="size-[6px] fill-white" />
                </div>
                <div className="flex">
                    {TRAY.map((n) => <IconButton key={n} name={n} className="h-full w-6" />)}
                </div>
                <time className="ml-[15px] mr-[12px] text-[12px]">14:33</time>
                <button type="button" aria-label="显示桌面" className="h-full w-[15px] border border-[#4a586c] bg-linear-to-b from-[#8b98aa] to-[#5b6a80]" />
            </div>
        </div>
    )
}

export default function App() {
    return (
        <div className="relative flex h-screen flex-col overflow-hidden bg-[#12a594] pt-[3px] font-['Noto_Sans','Noto_Sans_CJK_SC',sans-serif]">
            <div className="mx-1 flex min-h-0 flex-1 flex-col rounded-t-md bg-[#686868] shadow-[0_0_0_1px_#3d5a56]">
                <Header />
                <Toolbars />
                <main className="flex min-h-0 flex-1 gap-1 pb-[3px] pl-[2px] pr-[6px] pt-[2px]">
                    <div className="mr-px w-6 shrink-0">
                        <ToolColumn names={DRAW} />
                    </div>
                    <div className="flex min-w-0 flex-1 flex-col border-2 border-[#8c8c8c]">
                        <div className="flex min-h-0 flex-1">
                            <DrawingArea />
                            <div className="flex w-[18px] shrink-0 flex-col items-center bg-[#d7d7d7] py-[4px]">
                                <Arrow dir="up" className="size-[7px] fill-[#222]" />
                                <span className="flex-[13]" />
                                <span className={`${THUMB} bg-linear-to-r`} />
                                <span className="flex-[15]" />
                                <Arrow className="size-[7px] fill-[#222]" />
                            </div>
                        </div>
                        <ModelTabs />
                    </div>
                    <div className="flex w-6 shrink-0 flex-col">
                        <ToolColumn names={MODIFY} />
                        <ToolColumn names={ORDER} />
                    </div>
                </main>
                <CommandLine />
                <StatusBar />
            </div>
            <Taskbar />
            <div className="absolute right-[-29px] top-[718px] flex size-12 items-center rounded-full border-[3px] border-[#e3ebe3] bg-linear-to-b from-[#3d9e4c] to-[#5cc766] pl-[2px] text-[12px] font-bold text-white">38</div>
        </div>
    )
}
